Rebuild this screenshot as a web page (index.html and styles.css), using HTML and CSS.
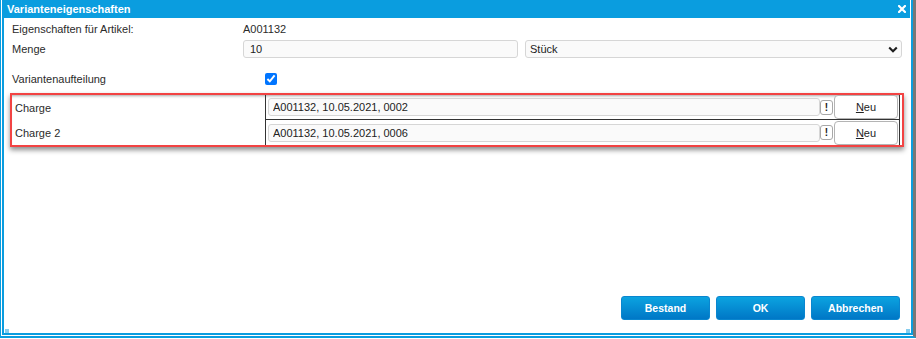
FILE: index.html
```html
<!DOCTYPE html>
<html lang="de">
<head>
<meta charset="utf-8">
<title>Varianteneigenschaften</title>
<link rel="stylesheet" href="styles.css">
</head>
<body>
<div class="screen">
  <div class="dialog">
    <div class="titlebar">
      <span class="title">Varianteneigenschaften</span>
      <svg class="close" width="8" height="8" viewBox="0 0 8 8"><path d="M1 1L7 7M7 1L1 7" stroke="#fff" stroke-width="2.2" stroke-linecap="square"/></svg>
    </div>
    <div class="content">
      <div class="row">
        <span class="label">Eigenschaften für Artikel:</span>
        <span class="value">A001132</span>
      </div>
      <div class="row">
        <span class="label">Menge</span>
        <div class="fields">
          <input class="field qty" type="text" value="10">
          <div class="select-wrap">
            <select class="field unit"><option>Stück</option></select>
            <svg class="chev" width="10" height="7" viewBox="0 0 10 7"><path d="M1.2 1.5L5 5.2L8.8 1.5" fill="none" stroke="#1e1e1e" stroke-width="2.1"/></svg>
          </div>
        </div>
      </div>
      <div class="row split">
        <span class="label">Variantenaufteilung</span>
        <input class="check" type="checkbox" checked>
      </div>
      <div class="highlight">
        <div class="grid">
          <div class="cell-label">Charge</div>
          <div class="cell-value first">
            <input class="field batch" type="text" value="A001132, 10.05.2021, 0002">
            <button class="bang">!</button>
            <button class="neu"><u>N</u>eu</button>
          </div>
          <div class="cell-label">Charge 2</div>
          <div class="cell-value">
            <input class="field batch" type="text" value="A001132, 10.05.2021, 0006">
            <button class="bang">!</button>
            <button class="neu"><u>N</u>eu</button>
          </div>
        </div>
      </div>
    </div>
    <div class="footer">
      <button class="btn">Bestand</button>
      <button class="btn">OK</button>
      <button class="btn">Abbrechen</button>
    </div>
    <span class="grip grip-left"></span>
    <span class="grip grip-right"></span>
  </div>
</div>
</body>
</html>
```
FILE: styles.css
```css
html, body {
  margin: 0;
  padding: 0;
  background: #fff;
}
body {
  width: 916px;
  height: 339px;
  overflow: hidden;
  font-family: "Liberation Sans", Arial, sans-serif;
  font-size: 11px;
  color: #2b2b2b;
}
.screen {
  box-sizing: border-box;
  width: 916px;
  height: 338px;
  border-left: 1px solid #0a9ddf;
  border-bottom: 2px solid #0a9ddf;
  border-right: 3px solid #777;
  padding: 0 0 1px 1px;
  display: flex;
}
.dialog {
  position: relative;
  flex: 1;
  display: flex;
  flex-direction: column;
  border: 2px solid #0a9ddf;
  border-top: 0;
  padding-right: 1px;
  background: #fff;
}
.titlebar {
  height: 18px;
  flex: none;
  background: #0a9ddf;
  color: #fff;
  font-weight: bold;
  font-size: 11px;
  display: flex;
  align-items: center;
  justify-content: space-between;
  padding: 0 4px 0 3px;
}
.close {
  display: block;
}
.content {
  flex: 1;
  padding-top: 1px;
}
.row {
  display: flex;
  align-items: center;
  height: 20px;
  padding-left: 8px;
}
.label {
  width: 231px;
  flex: none;
}
.fields {
  display: flex;
  gap: 7px;
}
.field {
  box-sizing: border-box;
  height: 18px;
  margin: 0;
  border: 1px solid #d6d6d6;
  border-radius: 3px;
  background: #fafafa;
  font-family: "Liberation Sans", Arial, sans-serif;
  font-size: 11px;
  color: #222;
  outline: none;
}
.qty {
  width: 275px;
  padding: 0 6px;
}
.select-wrap {
  position: relative;
  width: 377px;
}
.unit {
  width: 100%;
  appearance: none;
  -webkit-appearance: none;
  padding: 0 4px;
}
.chev {
  position: absolute;
  right: 4px;
  top: 6px;
}
.split {
  margin-top: 10px;
}
.check {
  width: 12px;
  height: 12px;
  margin: 0 0 0 22px;
  accent-color: #0075ff;
}
.highlight {
  margin: 4px 6px 0 6px;
  border: 2px solid #f24343;
  padding-right: 2px;
  box-shadow: 0 3px 5px rgba(0, 0, 0, 0.45);
}
.grid {
  display: grid;
  grid-template-columns: 253px 1fr;
  grid-template-rows: 25px 25px;
  border-right: 1px solid #333;
  box-shadow: inset 0 3px 3px -2px rgba(0, 0, 0, 0.35);
}
.cell-label {
  display: flex;
  align-items: center;
  padding-left: 3px;
}
.cell-value {
  box-sizing: border-box;
  display: flex;
  align-items: center;
  border-left: 1px solid #333;
  padding: 0 1px 0 2px;
}
.cell-value.first {
  border-bottom: 1px solid #333;
}
.batch {
  flex: 1;
  min-width: 0;
  padding: 0 4px;
}
.bang {
  box-sizing: border-box;
  width: 13px;
  height: 15px;
  margin: 0 1px 0 0;
  padding: 0;
  border: 1px solid #a8a8a8;
  border-radius: 3px;
  background: #fff;
  font-family: "Liberation Sans", Arial, sans-serif;
  font-weight: bold;
  font-size: 10px;
  color: #222;
  line-height: 13px;
}
.neu {
  box-sizing: border-box;
  width: 64px;
  height: 24px;
  margin: 0;
  padding: 0;
  border: 1px solid #b4b4b4;
  border-radius: 4px;
  background: #fff;
  font-family: "Liberation Sans", Arial, sans-serif;
  font-size: 11px;
  color: #222;
}
.footer {
  display: flex;
  justify-content: flex-end;
  gap: 6px;
  padding: 0 10px 13px 0;
}
.btn {
  box-sizing: border-box;
  width: 89px;
  height: 24px;
  margin: 0;
  padding: 0;
  border: 1px solid #0a86cf;
  border-radius: 3px;
  background: linear-gradient(#0ba3e0, #0077c6);
  color: #fff;
  font-family: "Liberation Sans", Arial, sans-serif;
  font-weight: bold;
  font-size: 10.5px;
}
.grip {
  position: absolute;
  bottom: 0;
  width: 4px;
  height: 4px;
  background: #86cdee;
}
.grip-left {
  left: 1px;
}
.grip-right {
  right: 1px;
}
```
